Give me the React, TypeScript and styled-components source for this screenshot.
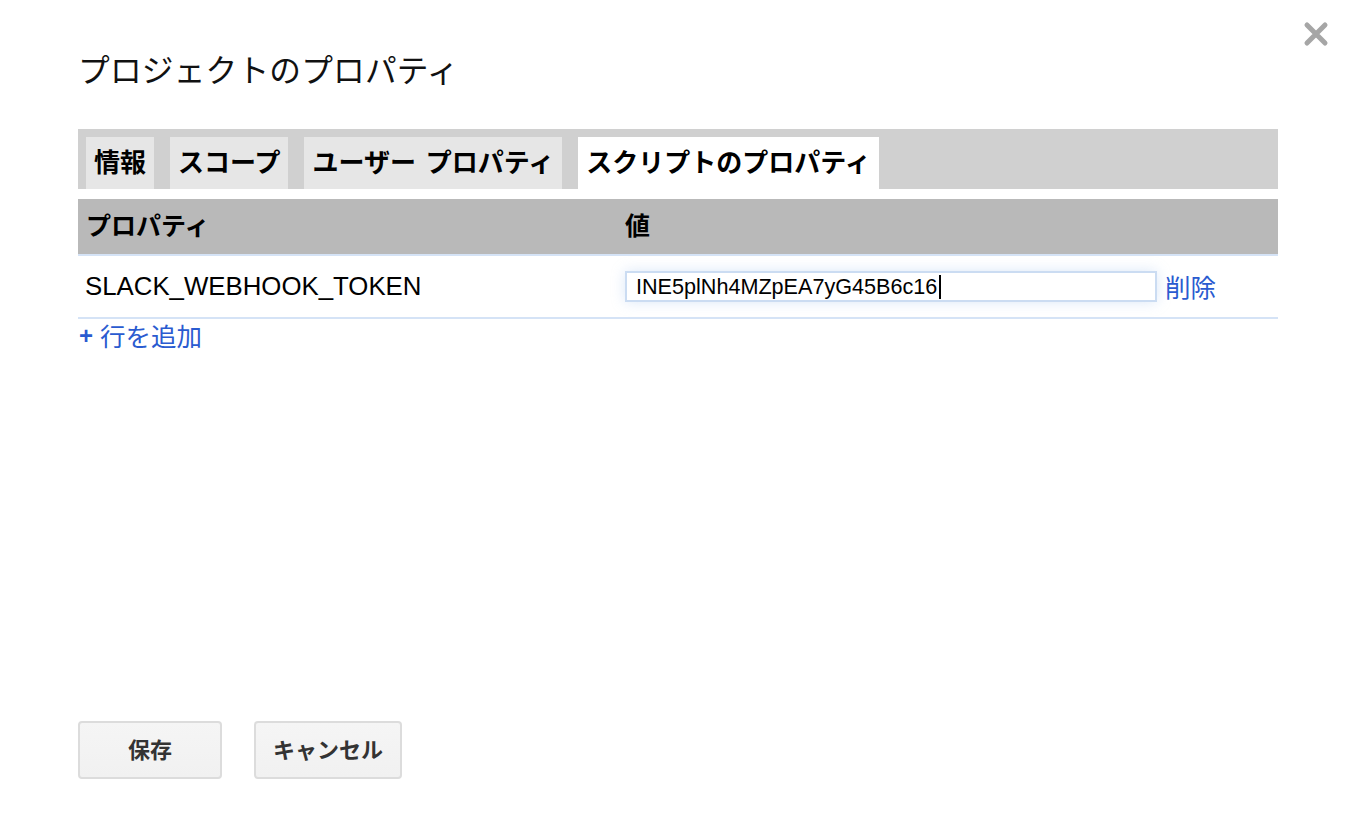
import React from "react";
import styled, { createGlobalStyle } from "styled-components";

const Global = createGlobalStyle`
  html, body { margin: 0; padding: 0; background: #ffffff; }
  body { font-family: "Liberation Sans", "Noto Sans CJK JP", sans-serif; color: #000; }
`;

const Page = styled.div`
  position: relative;
  width: 1348px;
  height: 828px;
  box-sizing: border-box;
  padding: 41px 70px 0 78px;
  display: flex;
  flex-direction: column;
`;

const CloseButton = styled.button`
  position: absolute;
  top: 21px;
  right: 19px;
  width: 26px;
  height: 26px;
  padding: 0;
  border: 0;
  background: transparent;
  display: flex;
  align-items: center;
  justify-content: center;
`;

const Title = styled.h1`
  margin: 0;
  font-family: "Noto Sans CJK JP", sans-serif;
  font-weight: 400;
  font-size: 31.7px;
  line-height: 54px;
  height: 54px;
  color: #111;
  letter-spacing: 0.2px;
`;

const TabBar = styled.div`
  margin-top: 34px;
  background: #d0d0d0;
  height: 60px;
  box-sizing: border-box;
  padding: 8px 8px 0;
  display: flex;
  gap: 16px;
  align-items: flex-end;
`;

const Tab = styled.div<{ $active?: boolean }>`
  height: 52px;
  box-sizing: border-box;
  display: flex;
  align-items: center;
  padding: 0 8px 6px;
  background: ${(p) => (p.$active ? "#ffffff" : "#e6e6e6")};
  font-family: "Noto Sans CJK JP", sans-serif;
  font-weight: 700;
  font-size: 26px;
  word-spacing: 4px;
  color: #000;
  white-space: pre;
`;

const Table = styled.div`
  margin-top: 10px;
  display: flex;
  flex-direction: column;
`;

const HeaderRow = styled.div`
  display: grid;
  grid-template-columns: 539px 1fr;
  height: 57px;
  box-sizing: border-box;
  background: #b9b9b9;
  border-bottom: 2px solid #d5e3f6;
`;

const HeaderCell = styled.div`
  display: flex;
  align-items: center;
  padding: 0 0 6px 8px;
  font-family: "Noto Sans CJK JP", sans-serif;
  font-weight: 700;
  font-size: 25px;
  color: #000;
`;

const DataRow = styled.div`
  display: grid;
  grid-template-columns: 539px 1fr;
  height: 63px;
  box-sizing: border-box;
  border-bottom: 2px solid #d5e3f6;
`;

const KeyCell = styled.div`
  display: flex;
  align-items: center;
  padding-left: 7px;
  font-family: "Liberation Sans", Arial, sans-serif;
  font-size: 25.8px;
  color: #000;
`;

const ValueCell = styled.div`
  display: flex;
  align-items: center;
  padding-left: 8px;
  gap: 8px;
`;

const ValueField = styled.div`
  width: 532px;
  height: 31px;
  box-sizing: border-box;
  border: 2px solid #cbdcf2;
  box-shadow: 0 0 14px rgba(150, 185, 235, 0.35);
  display: flex;
  align-items: center;
  padding-left: 9px;
  font-family: "Liberation Sans", Arial, sans-serif;
  font-size: 21.6px;
  color: #000;
  background: #fff;
`;

const Caret = styled.span`
  display: inline-block;
  width: 2px;
  height: 24px;
  margin-left: 2px;
  background: #000;
`;

const Link = styled.a`
  font-family: "Noto Sans CJK JP", sans-serif;
  font-size: 25.5px;
  color: #2a5bd0;
  text-decoration: none;
  cursor: pointer;
  padding-bottom: 3px;
`;

const AddRow = styled.div`
  display: flex;
  align-items: center;
  gap: 7px;
  height: 30px;
  font-family: "Noto Sans CJK JP", sans-serif;
  font-size: 25.5px;
  color: #2a5bd0;
`;

const Plus = styled.span`
  font-family: "Liberation Sans", Arial, sans-serif;
  font-weight: 700;
  font-size: 24px;
  margin-left: 1px;
  padding-top: 3px;
`;

const Spacer = styled.div`
  flex: 1;
`;

const Buttons = styled.div`
  display: flex;
  gap: 32px;
  margin-bottom: 49px;
`;

const Button = styled.button`
  min-width: 144px;
  height: 58px;
  box-sizing: border-box;
  padding: 0 17px 5px;
  border: 2px solid #dcdcdc;
  border-radius: 4px;
  background: linear-gradient(#f5f5f5, #f1f1f1);
  font-family: "Noto Sans CJK JP", sans-serif;
  font-weight: 700;
  font-size: 22px;
  color: #333;
  display: flex;
  align-items: center;
  justify-content: center;
`;

export default function App() {
  return (
    <>
      <Global />
      <Page>
        <CloseButton aria-label="閉じる">
          <svg width="24" height="24" viewBox="0 0 24 24">
            <path
              d="M3 3 L21 21 M21 3 L3 21"
              stroke="#a6a6a6"
              strokeWidth="5"
              strokeLinecap="round"
              style={{ filter: "blur(0.6px)" }}
            />
          </svg>
        </CloseButton>
        <Title>プロジェクトのプロパティ</Title>
        <TabBar>
          <Tab>情報</Tab>
          <Tab>スコープ</Tab>
          <Tab>ユーザー プロパティ</Tab>
          <Tab $active>スクリプトのプロパティ</Tab>
        </TabBar>
        <Table>
          <HeaderRow>
            <HeaderCell>プロパティ</HeaderCell>
            <HeaderCell>値</HeaderCell>
          </HeaderRow>
          <DataRow>
            <KeyCell>SLACK_WEBHOOK_TOKEN</KeyCell>
            <ValueCell>
              <ValueField>
                INE5plNh4MZpEA7yG45B6c16
                <Caret />
              </ValueField>
              <Link>削除</Link>
            </ValueCell>
          </DataRow>
        </Table>
        <AddRow>
          <Plus>+</Plus>
          <span>行を追加</span>
        </AddRow>
        <Spacer />
        <Buttons>
          <Button>保存</Button>
          <Button>キャンセル</Button>
        </Buttons>
      </Page>
    </>
  );
}
